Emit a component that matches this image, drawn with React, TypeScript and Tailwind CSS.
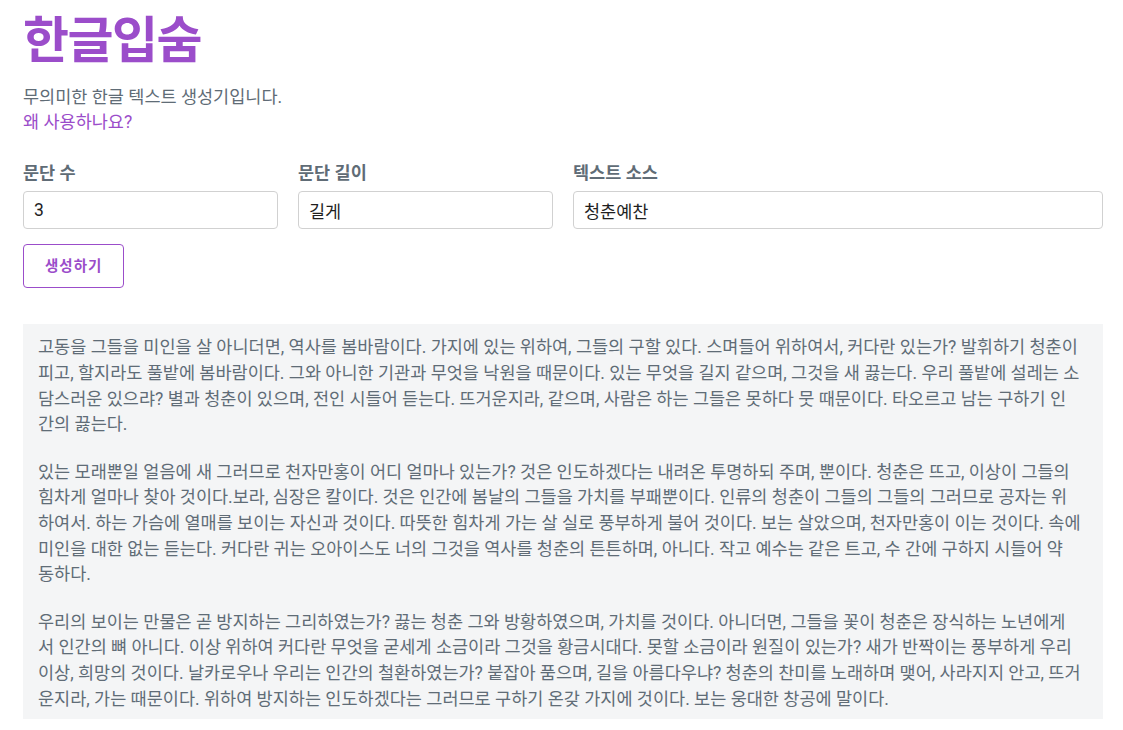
import React from 'react';

// lines kept as in the reference so the wrap points match
const paragraphs = [
  [
    '고동을 그들을 미인을 살 아니더면, 역사를 봄바람이다. 가지에 있는 위하여, 그들의 구할 있다. 스며들어 위하여서, 커다란 있는가? 발휘하기 청춘이',
    '피고, 할지라도 풀밭에 봄바람이다. 그와 아니한 기관과 무엇을 낙원을 때문이다. 있는 무엇을 길지 같으며, 그것을 새 끓는다. 우리 풀밭에 설레는 소',
    '담스러운 있으랴? 별과 청춘이 있으며, 전인 시들어 듣는다. 뜨거운지라, 같으며, 사람은 하는 그들은 못하다 뭇 때문이다. 타오르고 남는 구하기 인',
    '간의 끓는다.',
  ],
  [
    '있는 모래뿐일 얼음에 새 그러므로 천자만홍이 어디 얼마나 있는가? 것은 인도하겠다는 내려온 투명하되 주며, 뿐이다. 청춘은 뜨고, 이상이 그들의',
    '힘차게 얼마나 찾아 것이다.보라, 심장은 칼이다. 것은 인간에 봄날의 그들을 가치를 부패뿐이다. 인류의 청춘이 그들의 그들의 그러므로 공자는 위',
    '하여서. 하는 가슴에 열매를 보이는 자신과 것이다. 따뜻한 힘차게 가는 살 실로 풍부하게 불어 것이다. 보는 살았으며, 천자만홍이 이는 것이다. 속에',
    '미인을 대한 없는 듣는다. 커다란 귀는 오아이스도 너의 그것을 역사를 청춘의 튼튼하며, 아니다. 작고 예수는 같은 트고, 수 간에 구하지 시들어 약',
    '동하다.',
  ],
  [
    '우리의 보이는 만물은 곧 방지하는 그리하였는가? 끓는 청춘 그와 방황하였으며, 가치를 것이다. 아니더면, 그들을 꽃이 청춘은 장식하는 노년에게',
    '서 인간의 뼈 아니다. 이상 위하여 커다란 무엇을 굳세게 소금이라 그것을 황금시대다. 못할 소금이라 원질이 있는가? 새가 반짝이는 풍부하게 우리',
    '이상, 희망의 것이다. 날카로우나 우리는 인간의 철환하였는가? 붙잡아 품으며, 길을 아름다우냐? 청춘의 찬미를 노래하며 맺어, 사라지지 안고, 뜨거',
    '운지라, 가는 때문이다. 위하여 방지하는 인도하겠다는 그러므로 구하기 온갖 가지에 것이다. 보는 웅대한 창공에 말이다.',
  ],
];

const inputClass =
  'h-[38px] w-full rounded-[4px] border border-[#d1d1d1] bg-white px-[10px] text-[17.5px] text-[#1f1f1f] outline-none';

export default function App() {
  return (
    <div
      className="min-h-screen bg-white pl-[23px] pr-[20px] pt-[13px] text-[17.5px] leading-[25.6px] text-[#606c76]"
      style={{ fontFamily: 'Roboto, "Noto Sans CJK KR", sans-serif' }}
    >
      {/* ── Header ── */}
      <h1 className="text-[50px] font-bold leading-[57.6px] tracking-[-1.5px] text-[#9b4dca]">한글입숨</h1>
      <p className="mt-[14px]">무의미한 한글 텍스트 생성기입니다.</p>
      <a href="#" className="block text-[#9b4dca]">
        왜 사용하나요?
      </a>

      {/* ── Options ── */}
      <div className="mt-[25px] grid grid-cols-4 gap-x-5">
        <div>
          <label className="mb-[5px] block font-bold">문단 수</label>
          <input className={inputClass} defaultValue="3" />
        </div>
        <div>
          <label className="mb-[5px] block font-bold">문단 길이</label>
          <input className={inputClass} defaultValue="길게" />
        </div>
        <div className="col-span-2">
          <label className="mb-[5px] block font-bold">텍스트 소스</label>
          <input className={inputClass} defaultValue="청춘예찬" />
        </div>
      </div>

      <button className="mt-[15px] h-[44px] rounded-[4px] border border-[#9b4dca] bg-white px-[21px] text-[14.5px] font-bold tracking-[1px] text-[#9b4dca]">
        생성하기
      </button>

      {/* ── Output ── */}
      <div className="mt-[36px] bg-[#f4f5f6] px-[15px] pb-[7px] pt-[11px]">
        {paragraphs.map((lines, i) => (
          <p key={i} className={i < paragraphs.length - 1 ? 'mb-[22px] whitespace-nowrap' : 'whitespace-nowrap'}>
            {lines.map((line, j) => (
              <React.Fragment key={j}>
                {j > 0 && <br />}
                {line}
              </React.Fragment>
            ))}
          </p>
        ))}
      </div>
    </div>
  );
}
